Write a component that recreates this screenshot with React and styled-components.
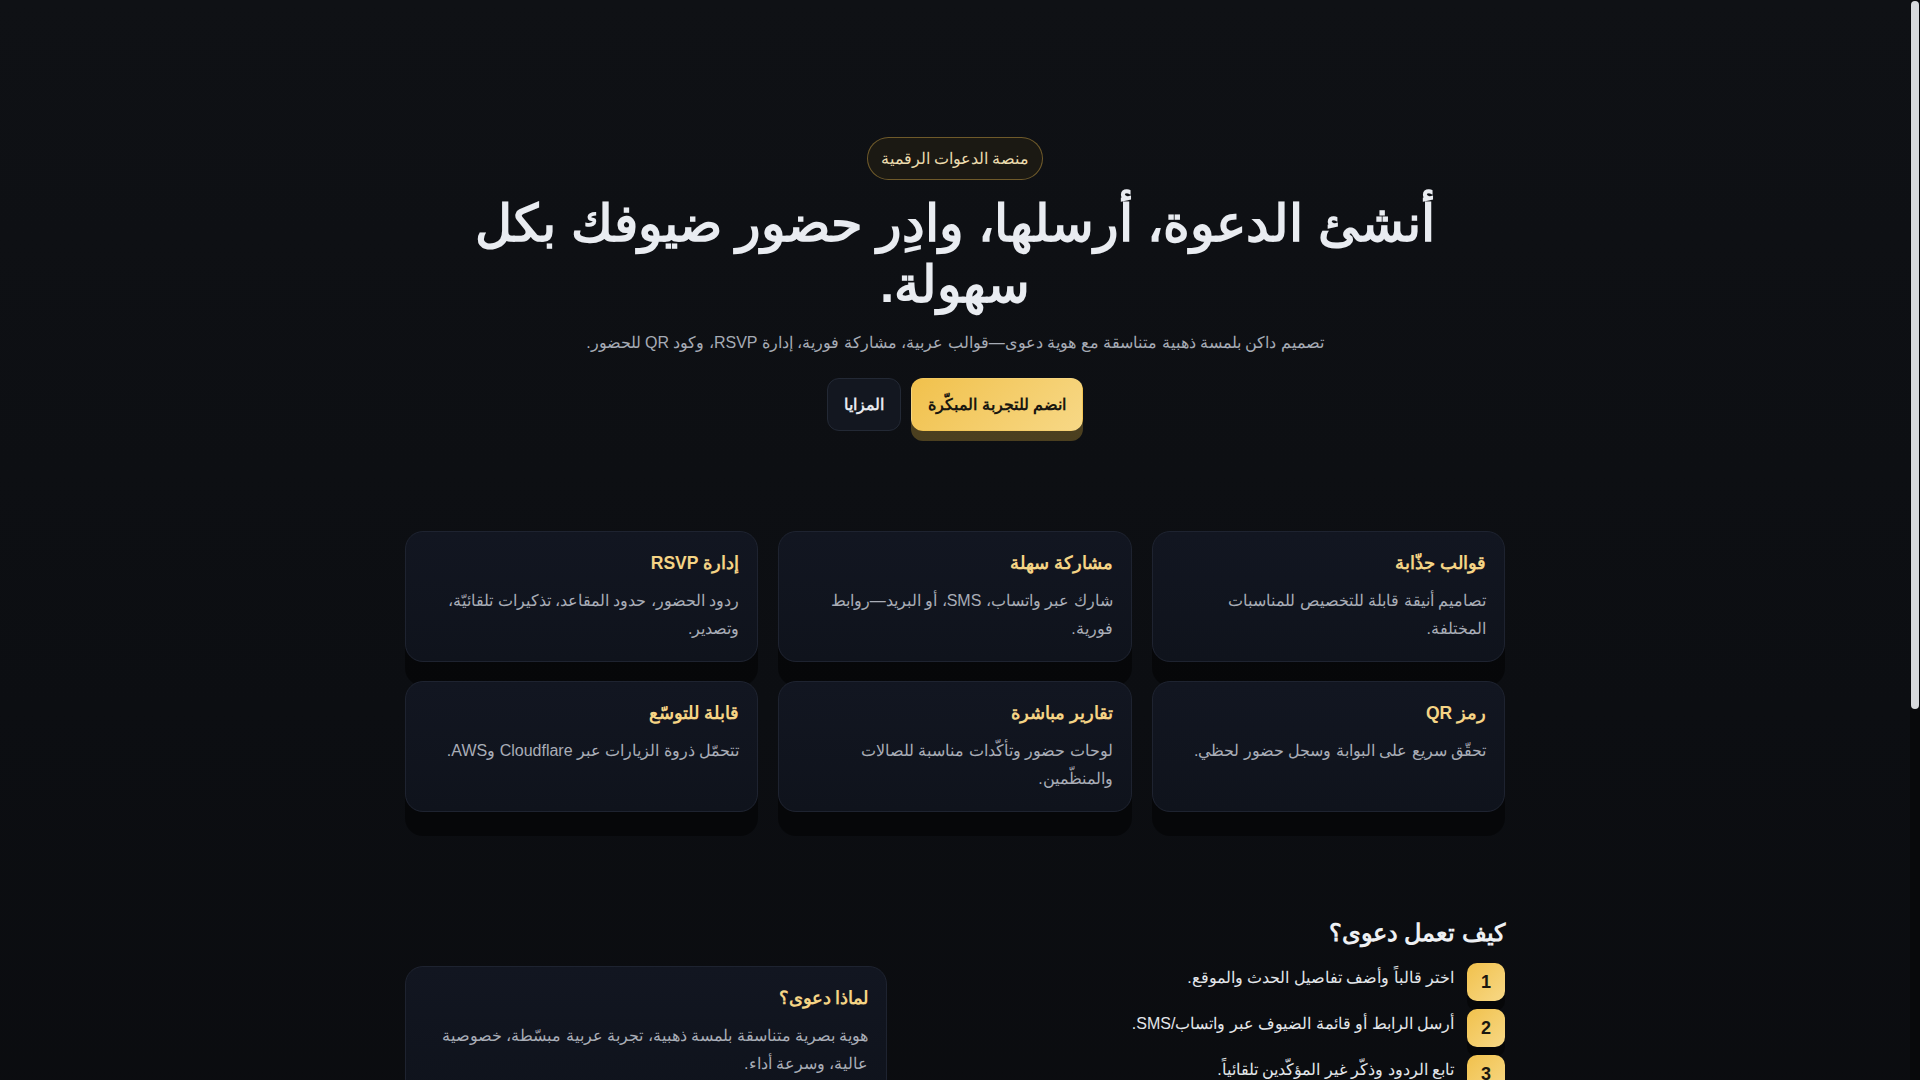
import React from 'react';
import styled, { createGlobalStyle } from 'styled-components';

const GlobalStyle = createGlobalStyle`
  * { box-sizing: border-box; }
  html { background: #0b0c10; }
  body {
    margin: 0;
    background: linear-gradient(180deg, #0f1115 0%, #0c0e12 50%, #0a0b0e 100%);
    color: #e9ecf1;
    font-family: "Liberation Sans", sans-serif;
  }
`;

const Viewport = styled.div`
  padding-right: 10px;
`;

const ScrollTrack = styled.div`
  position: fixed;
  top: 0;
  right: 0;
  width: 10px;
  height: 100vh;
  background: #08090b;
  z-index: 10;
`;

const ScrollThumb = styled.div`
  margin: 1px 1px 0;
  height: 708px;
  border-radius: 5px;
  background: #d6d8db;
`;

const Page = styled.div`
  direction: rtl;
  padding: 0 20px 160px;
`;

const Container = styled.div`
  max-width: 1100px;
  margin: 0 auto;
`;

const Hero = styled.header`
  display: flex;
  flex-direction: column;
  align-items: center;
  text-align: center;
  padding-top: 137px;
`;

const Pill = styled.span`
  display: inline-block;
  padding: 8px 13px;
  border-radius: 999px;
  border: 1px solid rgba(214, 170, 72, 0.45);
  background: #1b1913;
  color: #ecdcae;
  font-size: 15.6px;
  line-height: 25px;
`;

const Title = styled.h1`
  margin: 13px 0 0;
  font-size: 51px;
  font-weight: 700;
  line-height: 1.2;
  color: #e9ecf1;
`;

const Lead = styled.p`
  margin: 14px 0 0;
  font-size: 16px;
  line-height: 1.8;
  color: #a6abb5;
`;

const Actions = styled.div`
  display: flex;
  gap: 10px;
  margin-top: 20px;
`;

const Button = styled.a`
  display: inline-block;
  padding: 12px 16px;
  border-radius: 12px;
  font-size: 16px;
  font-weight: 700;
  line-height: 27px;
  text-decoration: none;
  cursor: pointer;
  border: 1px solid ${(p) => (p.$primary ? 'transparent' : '#232935')};
  background: ${(p) =>
    p.$primary ? 'linear-gradient(135deg, #f1c14c 0%, #f7d886 100%)' : '#131720'};
  color: ${(p) => (p.$primary ? '#1a1710' : '#e6e8ec')};
  box-shadow: ${(p) => (p.$primary ? '0 10px 0 rgba(245, 197, 66, 0.27)' : 'none')};
`;

const Features = styled.section`
  display: grid;
  grid-template-columns: repeat(3, 1fr);
  gap: 19px 20px;
  margin-top: 100px;
`;

const Card = styled.div`
  padding: 18px;
  border-radius: 18px;
  border: 1px solid #1e2330;
  background: linear-gradient(180deg, #121621 0%, #0f131c 100%);
  box-shadow: 0 24px 0 rgba(0, 0, 0, 0.45);
`;

const CardTitle = styled.h3`
  margin: 0;
  font-size: 17.5px;
  font-weight: 700;
  line-height: 27px;
  color: #f5d485;
`;

const CardText = styled.p`
  margin: 10px 0 0;
  font-size: 16px;
  line-height: 28px;
  color: #a9adb7;
`;

const Lower = styled.section`
  display: grid;
  grid-template-columns: 1.1fr 0.9fr;
  gap: 28px;
  align-items: start;
  margin-top: 101px;
`;

const HowCol = styled.div`
  display: flex;
  flex-direction: column;
`;

const SectionTitle = styled.h2`
  margin: 0;
  font-size: 24px;
  font-weight: 700;
  line-height: 40px;
  color: #eef0f3;
`;

const Steps = styled.ol`
  list-style: none;
  margin: 10px 0 0;
  padding: 0;
  display: flex;
  flex-direction: column;
  gap: 8px;
`;

const Step = styled.li`
  display: flex;
  align-items: flex-start;
  gap: 13px;
`;

const StepNum = styled.span`
  flex: 0 0 38px;
  width: 38px;
  height: 38px;
  border-radius: 10px;
  display: flex;
  align-items: center;
  justify-content: center;
  background: linear-gradient(135deg, #f1c14c 0%, #f7d886 100%);
  color: #1a1710;
  font-size: 18px;
  font-weight: 700;
  box-shadow: 0 10px 0 rgba(0, 0, 0, 0.45);
`;

const StepText = styled.span`
  padding-top: 2px;
  font-size: 16px;
  line-height: 26px;
  color: #e3e6ea;
`;

const WhyCard = styled(Card)`
  margin-top: 53px;
`;

const Footer = styled.footer`
  margin-top: 120px;
  padding-top: 24px;
  border-top: 1px solid #1a1e27;
  text-align: center;
  font-size: 14px;
  color: #6b7280;
`;

const features = [
  { t: 'قوالب جذّابة', d: 'تصاميم أنيقة قابلة للتخصيص للمناسبات المختلفة.' },
  { t: 'مشاركة سهلة', d: 'شارك عبر واتساب، SMS، أو البريد—روابط فورية.' },
  { t: 'إدارة RSVP', d: 'ردود الحضور، حدود المقاعد، تذكيرات تلقائيّة، وتصدير.' },
  { t: 'رمز QR', d: 'تحقّق سريع على البوابة وسجل حضور لحظي.' },
  { t: 'تقارير مباشرة', d: 'لوحات حضور وتأكّدات مناسبة للصالات والمنظّمين.' },
  { t: 'قابلة للتوسّع', d: 'تتحمّل ذروة الزيارات عبر Cloudflare وAWS.' },
];

const steps = [
  'اختر قالباً وأضف تفاصيل الحدث والموقع.',
  'أرسل الرابط أو قائمة الضيوف عبر واتساب/SMS.',
  'تابع الردود وذكّر غير المؤكّدين تلقائياً.',
];

export default function App() {
  return (
    <>
      <GlobalStyle />
      <ScrollTrack>
        <ScrollThumb />
      </ScrollTrack>
      <Viewport>
        <Page>
          <Container>
            <Hero>
              <Pill>منصة الدعوات الرقمية</Pill>
              <Title>أنشئ الدعوة، أرسلها، وادِر حضور ضيوفك بكل سهولة.</Title>
              <Lead>
                تصميم داكن بلمسة ذهبية متناسقة مع هوية دعوى—قوالب عربية، مشاركة فورية، إدارة RSVP، وكود QR للحضور.
              </Lead>
              <Actions>
                <Button $primary>انضم للتجربة المبكّرة</Button>
                <Button>المزايا</Button>
              </Actions>
            </Hero>

            <Features>
              {features.map((f) => (
                <Card key={f.t}>
                  <CardTitle>{f.t}</CardTitle>
                  <CardText>{f.d}</CardText>
                </Card>
              ))}
            </Features>

            <Lower>
              <HowCol>
                <SectionTitle>كيف تعمل دعوى؟</SectionTitle>
                <Steps>
                  {steps.map((s, i) => (
                    <Step key={i}>
                      <StepNum>{i + 1}</StepNum>
                      <StepText>{s}</StepText>
                    </Step>
                  ))}
                </Steps>
              </HowCol>
              <WhyCard>
                <CardTitle>لماذا دعوى؟</CardTitle>
                <CardText>
                  هوية بصرية متناسقة بلمسة ذهبية، تجربة عربية مبسّطة، خصوصية عالية، وسرعة أداء.
                </CardText>
              </WhyCard>
            </Lower>

            <Footer>© 2025 دعوى — جميع الحقوق محفوظة.</Footer>
          </Container>
        </Page>
      </Viewport>
    </>
  );
}
